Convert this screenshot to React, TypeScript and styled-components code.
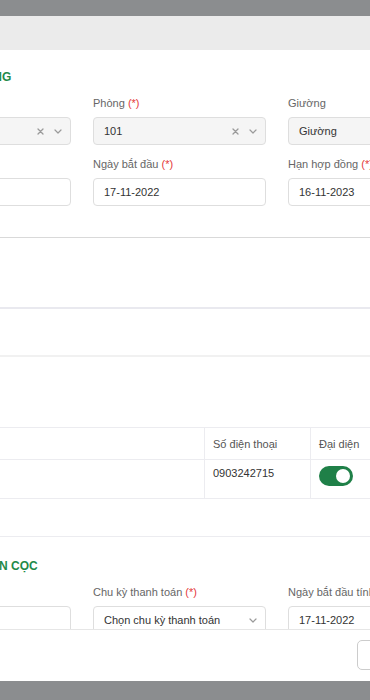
import { createGlobalStyle, styled } from "styled-components";

const GlobalStyle = createGlobalStyle`
  html, body {
    margin: 0;
    padding: 0;
    background: #8b8d8f;
    overflow: hidden;
  }
  * {
    box-sizing: border-box;
  }
`;

const ClearIcon = () => (
  <svg width="7" height="7" viewBox="0 0 7 7">
    <path d="M1 1 L6 6 M6 1 L1 6" stroke="#9a9a9a" strokeWidth="1.3" strokeLinecap="round" />
  </svg>
);

const ChevronIcon = () => (
  <svg width="8" height="5" viewBox="0 0 8 5">
    <path d="M1 1 L4 4 L7 1" stroke="#9a9a9a" strokeWidth="1.2" fill="none" strokeLinecap="round" strokeLinejoin="round" />
  </svg>
);

const App = () => {
  return (
    <Page>
      <GlobalStyle />
      <Modal>
        <Header>
          <HeaderTitle>Tạo hợp đồng</HeaderTitle>
        </Header>
        <Body>
          <SectionTitle>THÔNG TIN PHÒNG</SectionTitle>
          <FormGrid>
            <Field>
              <Label>Tòa nhà <Req>(*)</Req></Label>
              <Input $disabled>
                <Value>Tòa nhà A</Value>
                <Icons>
                  <ClearIcon />
                  <ChevronIcon />
                </Icons>
              </Input>
            </Field>
            <Field>
              <Label>Phòng <Req>(*)</Req></Label>
              <Input $disabled>
                <Value>101</Value>
                <Icons>
                  <ClearIcon />
                  <ChevronIcon />
                </Icons>
              </Input>
            </Field>
            <Field>
              <Label>Giường</Label>
              <Input $disabled>
                <Value>Giường</Value>
              </Input>
            </Field>
            <Field>
              <Label>Ngày ký <Req>(*)</Req></Label>
              <Input>
                <Value>17-11-2022</Value>
              </Input>
            </Field>
            <Field>
              <Label>Ngày bắt đầu <Req>(*)</Req></Label>
              <Input>
                <Value>17-11-2022</Value>
              </Input>
            </Field>
            <Field>
              <Label>Hạn hợp đồng <Req>(*)</Req></Label>
              <Input>
                <Value>16-11-2023</Value>
              </Input>
            </Field>
          </FormGrid>

          <Divider $mt={31} $color="#d9d9d9" $size={1} />
          <Divider $mt={69} $color="#e9e9ef" $size={2} />
          <Divider $mt={46} $color="#f1f1f1" $size={2} />

          <Table>
            <thead>
              <tr>
                <Th $w={306}>Họ và tên</Th>
                <Th $w={106}>Số điện thoại</Th>
                <Th>Đại diện</Th>
              </tr>
            </thead>
            <tbody>
              <tr>
                <Td>Nguyễn Văn A</Td>
                <Td>0903242715</Td>
                <Td>
                  <Toggle $on />
                </Td>
              </tr>
            </tbody>
          </Table>

          <Divider $mt={37} $color="#ececf0" $size={1} />

          <SectionTitle $mt={21}>THANH TOÁN TIỀN CỌC</SectionTitle>
          <FormGrid>
            <Field>
              <Label>Tiền cọc <Req>(*)</Req></Label>
              <Input>
                <Value>0</Value>
              </Input>
            </Field>
            <Field>
              <Label>Chu kỳ thanh toán <Req>(*)</Req></Label>
              <Input>
                <Value>Chọn chu kỳ thanh toán</Value>
                <Icons>
                  <ChevronIcon />
                </Icons>
              </Input>
            </Field>
            <Field>
              <Label>Ngày bắt đầu tính tiền <Req>(*)</Req></Label>
              <Input>
                <Value>17-11-2022</Value>
              </Input>
            </Field>
          </FormGrid>
        </Body>
        <Footer>
          <Button>Hủy bỏ</Button>
          <Button $primary>Lưu</Button>
        </Footer>
      </Modal>
    </Page>
  );
};

export default App;

const Page = styled.div`
  width: 370px;
  height: 700px;
  overflow: hidden;
  padding-top: 16px;
  background: #8b8d8f;
  font-family: "Liberation Sans", Arial, sans-serif;
`;

const Modal = styled.div`
  width: 620px;
  margin-left: -122px;
  background: #ffffff;
  display: flex;
  flex-direction: column;
`;

const Header = styled.div`
  height: 34px;
  background: #ebebeb;
  display: flex;
  align-items: center;
  padding: 0 20px;
`;

const HeaderTitle = styled.div`
  font-size: 13px;
  font-weight: 700;
  color: #333;
`;

const Body = styled.div`
  height: 579px;
  overflow: hidden;
  padding: 19px 20px 0;
`;

const SectionTitle = styled.div<{ $mt?: number }>`
  margin-top: ${(p) => p.$mt ?? 0}px;
  margin-bottom: 11px;
  font-size: 12px;
  line-height: 16px;
  font-weight: 700;
  color: #1f8a4a;
  white-space: nowrap;
`;

const FormGrid = styled.div`
  display: grid;
  grid-template-columns: repeat(3, 173px);
  column-gap: 22px;
  row-gap: 12px;
`;

const Field = styled.div`
  display: flex;
  flex-direction: column;
  gap: 7px;
`;

const Label = styled.div`
  font-size: 11px;
  line-height: 14px;
  color: #666666;
  white-space: nowrap;
`;

const Req = styled.span`
  color: #e5393b;
`;

const Input = styled.div<{ $disabled?: boolean }>`
  height: 28px;
  border: 1px solid #dedede;
  border-radius: 4px;
  background: ${(p) => (p.$disabled ? "#f5f5f5" : "#ffffff")};
  display: flex;
  align-items: center;
  justify-content: space-between;
  padding: 0 8px 0 10px;
`;

const Value = styled.span`
  font-size: 11px;
  color: #333333;
`;

const Icons = styled.div`
  display: flex;
  align-items: center;
  gap: 10px;
`;

const Divider = styled.div<{ $mt: number; $color: string; $size: number }>`
  margin-top: ${(p) => p.$mt}px;
  height: ${(p) => p.$size}px;
  background: ${(p) => p.$color};
`;

const Table = styled.table`
  margin-top: 70px;
  width: 100%;
  border-collapse: collapse;
  font-size: 11px;
  color: #333333;
`;

const Th = styled.th<{ $w?: number }>`
  width: ${(p) => (p.$w ? `${p.$w}px` : "auto")};
  height: 32px;
  padding: 0 8px;
  text-align: left;
  font-weight: 400;
  color: #555555;
  border: 1px solid #ececf0;
`;

const Td = styled.td`
  height: 39px;
  padding: 0 8px;
  vertical-align: top;
  padding-top: 7px;
  border: 1px solid #ececf0;
`;

const Toggle = styled.div<{ $on?: boolean }>`
  width: 34px;
  height: 20px;
  margin-top: -1px;
  border-radius: 10px;
  background: ${(p) => (p.$on ? "#1f8048" : "#cccccc")};
  position: relative;

  &::after {
    content: "";
    position: absolute;
    top: 3px;
    left: ${(p) => (p.$on ? "17px" : "3px")};
    width: 14px;
    height: 14px;
    border-radius: 50%;
    background: #ffffff;
  }
`;

const Footer = styled.div`
  height: 52px;
  border-top: 1px solid #e6e6e6;
  display: flex;
  justify-content: flex-end;
  align-items: flex-start;
  gap: 8px;
  padding: 10px 14px 0;
`;

const Button = styled.button<{ $primary?: boolean }>`
  height: 30px;
  padding: 0 14px;
  border-radius: 5px;
  font-family: inherit;
  font-size: 12px;
  border: 1px solid ${(p) => (p.$primary ? "#1f8048" : "#cccccc")};
  background: ${(p) => (p.$primary ? "#1f8048" : "#ffffff")};
  color: ${(p) => (p.$primary ? "#ffffff" : "#333333")};
`;
